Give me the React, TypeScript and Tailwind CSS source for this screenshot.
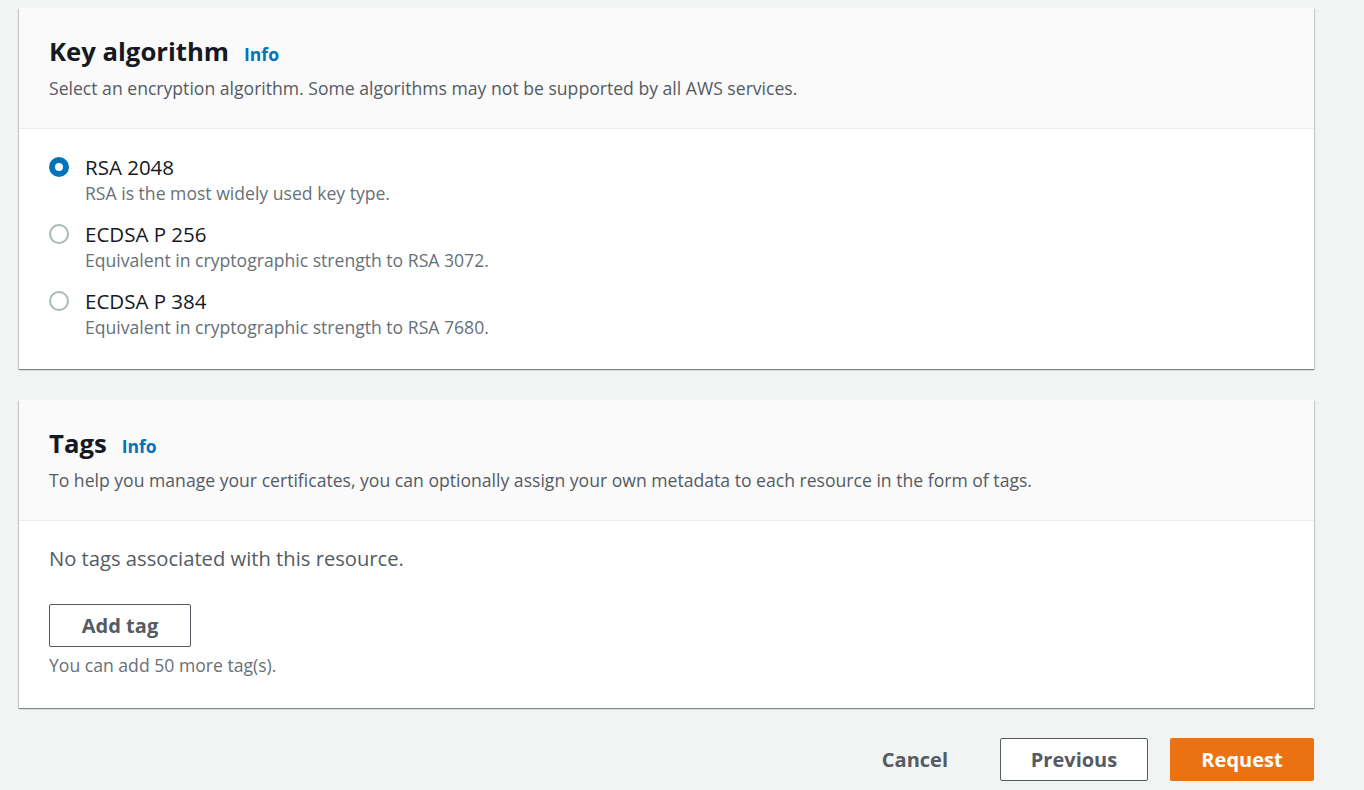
import React, { useState } from "react"

const font = { fontFamily: '"Open Sans", "Noto Sans", Arial, sans-serif' }

type Option = { value: string; label: string; hint: string }

const algorithms: Option[] = [
  { value: "RSA_2048", label: "RSA 2048", hint: "RSA is the most widely used key type." },
  { value: "EC_prime256v1", label: "ECDSA P 256", hint: "Equivalent in cryptographic strength to RSA 3072." },
  { value: "EC_secp384r1", label: "ECDSA P 384", hint: "Equivalent in cryptographic strength to RSA 7680." },
]

function CardHeader({ title, description }: { title: string; description: string }) {
  return (
    <div className="border-b border-[#eaeded] bg-[#fafafa] px-[30px] py-[28px]">
      <div className="flex items-baseline h-[32px]">
        <h2 className="text-[25.7px] font-bold leading-[32px] text-[#16191f]">{title}</h2>
        <a className="ml-[15px] text-[17.5px] font-bold text-[#0073bb]">Info</a>
      </div>
      <p className="mt-[8px] text-[17.6px] leading-[24px] text-[#545b64]">{description}</p>
    </div>
  )
}

function Card({ children }: { children: React.ReactNode }) {
  return (
    <div className="bg-white shadow-[0_1px_1px_0_rgba(0,28,36,0.3),1px_1px_1px_0_rgba(0,28,36,0.15),-1px_1px_1px_0_rgba(0,28,36,0.15)]">
      {children}
    </div>
  )
}

function Radio({ checked }: { checked: boolean }) {
  return checked ? (
    <span className="mt-[3px] block h-[20px] w-[20px] shrink-0 rounded-full border-[6px] border-[#0073bb] bg-white" />
  ) : (
    <span className="mt-[3px] block h-[20px] w-[20px] shrink-0 rounded-full border-2 border-[#aab7b8] bg-white" />
  )
}

export default function App() {
  const [algorithm, setAlgorithm] = useState("RSA_2048")

  return (
    <div className="min-h-[790px] bg-[#f2f3f3] pl-[19px] pr-[50px] pt-[8px]" style={font}>
      <Card>
        <CardHeader
          title="Key algorithm"
          description="Select an encryption algorithm. Some algorithms may not be supported by all AWS services."
        />
        <div className="flex flex-col gap-[16px] px-[30px] pb-[30px] pt-[25px]">
          {algorithms.map((option) => (
            <label
              key={option.value}
              className="flex cursor-pointer gap-[16px]"
              onClick={() => setAlgorithm(option.value)}
            >
              <Radio checked={algorithm === option.value} />
              <div>
                <p className="text-[20.5px] leading-[26px] text-[#16191f]">{option.label}</p>
                <p className="mt-[1px] text-[17.6px] leading-[24px] text-[#687078]">{option.hint}</p>
              </div>
            </label>
          ))}
        </div>
      </Card>

      <div className="mt-[31px]">
        <Card>
          <CardHeader
            title="Tags"
            description="To help you manage your certificates, you can optionally assign your own metadata to each resource in the form of tags."
          />
          <div className="px-[30px] pb-[31px] pt-[24px]">
            <p className="text-[20.2px] leading-[26px] text-[#545b64]">No tags associated with this resource.</p>
            <button className="mt-[33px] h-[43px] w-[142px] rounded-[2px] border border-[#545b64] bg-white text-[20px] font-bold text-[#545b64]">
              Add tag
            </button>
            <p className="mt-[6px] text-[17.6px] leading-[24px] text-[#687078]">You can add 50 more tag(s).</p>
          </div>
        </Card>
      </div>

      <div className="mt-[30px] flex items-center justify-end gap-[22px]">
        <button className="h-[43px] px-[30px] text-[20px] font-bold text-[#545b64]">Cancel</button>
        <button className="h-[43px] w-[148px] rounded-[2px] border border-[#545b64] bg-white text-[20px] font-bold text-[#545b64]">
          Previous
        </button>
        <button className="h-[43px] w-[144px] rounded-[2px] bg-[#ec7211] text-[20px] font-bold text-white">
          Request
        </button>
      </div>
    </div>
  )
}
